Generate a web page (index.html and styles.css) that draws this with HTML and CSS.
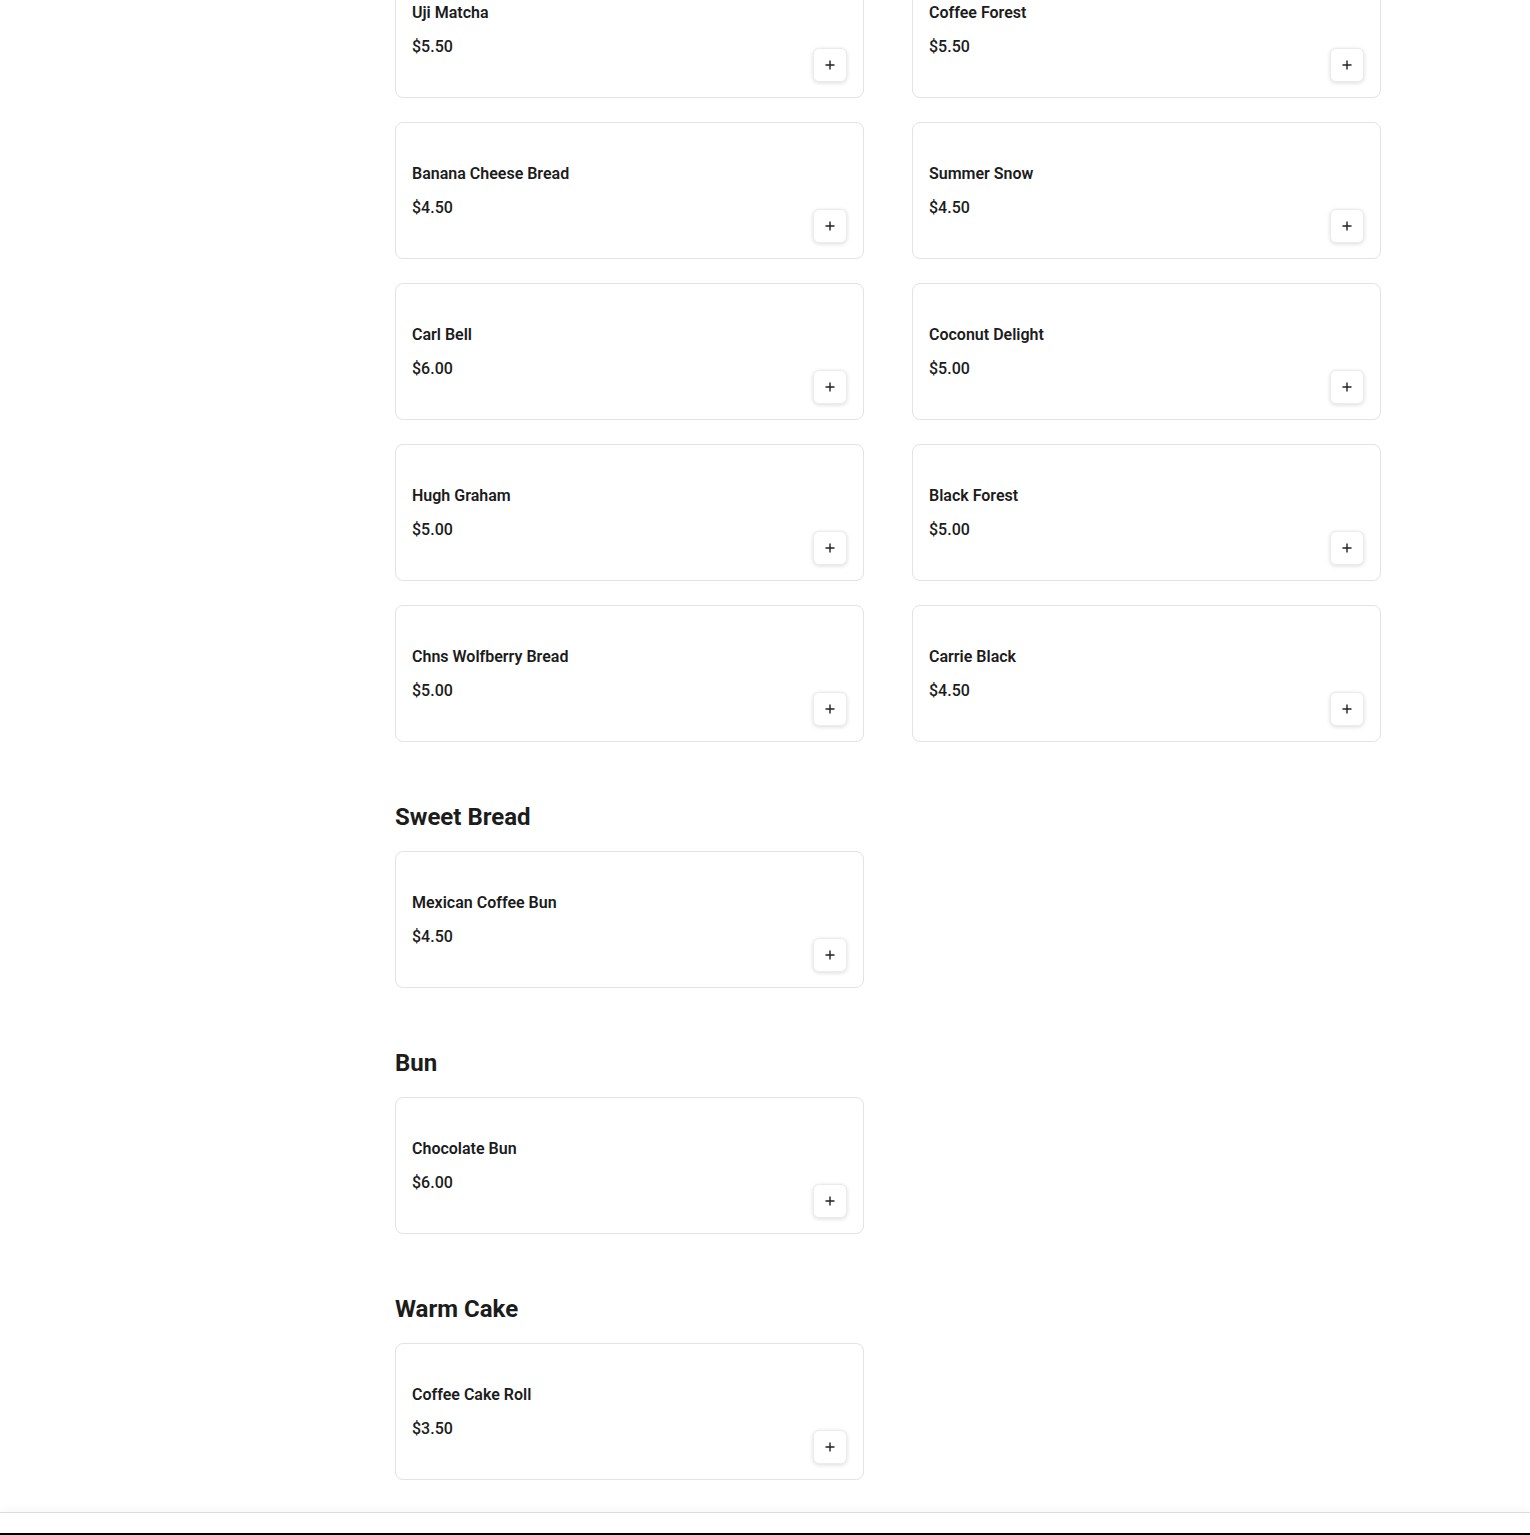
FILE: index.html
```html
<!DOCTYPE html>
<html lang="en">
<head>
    <meta charset="UTF-8">
    <meta name="viewport" content="width=device-width, initial-scale=1.0">
    <title>Menu</title>
    <link rel="stylesheet" href="styles.css">
</head>
<body>
    <main class="menu">
        <section class="menu-section">
            <div class="item-grid">
                <div class="item-card">
                    <div class="item-info">
                        <h3 class="item-name">Uji Matcha</h3>
                        <p class="item-price">$5.50</p>
                    </div>
                    <button class="add-btn" aria-label="Add"><svg width="12" height="12" viewBox="0 0 12 12"><path d="M6 1.5v9M1.5 6h9" stroke="#222" stroke-width="1.4" fill="none"/></svg></button>
                </div>
                <div class="item-card">
                    <div class="item-info">
                        <h3 class="item-name">Coffee Forest</h3>
                        <p class="item-price">$5.50</p>
                    </div>
                    <button class="add-btn" aria-label="Add"><svg width="12" height="12" viewBox="0 0 12 12"><path d="M6 1.5v9M1.5 6h9" stroke="#222" stroke-width="1.4" fill="none"/></svg></button>
                </div>
                <div class="item-card">
                    <div class="item-info">
                        <h3 class="item-name">Banana Cheese Bread</h3>
                        <p class="item-price">$4.50</p>
                    </div>
                    <button class="add-btn" aria-label="Add"><svg width="12" height="12" viewBox="0 0 12 12"><path d="M6 1.5v9M1.5 6h9" stroke="#222" stroke-width="1.4" fill="none"/></svg></button>
                </div>
                <div class="item-card">
                    <div class="item-info">
                        <h3 class="item-name">Summer Snow</h3>
                        <p class="item-price">$4.50</p>
                    </div>
                    <button class="add-btn" aria-label="Add"><svg width="12" height="12" viewBox="0 0 12 12"><path d="M6 1.5v9M1.5 6h9" stroke="#222" stroke-width="1.4" fill="none"/></svg></button>
                </div>
                <div class="item-card">
                    <div class="item-info">
                        <h3 class="item-name">Carl Bell</h3>
                        <p class="item-price">$6.00</p>
                    </div>
                    <button class="add-btn" aria-label="Add"><svg width="12" height="12" viewBox="0 0 12 12"><path d="M6 1.5v9M1.5 6h9" stroke="#222" stroke-width="1.4" fill="none"/></svg></button>
                </div>
                <div class="item-card">
                    <div class="item-info">
                        <h3 class="item-name">Coconut Delight</h3>
                        <p class="item-price">$5.00</p>
                    </div>
                    <button class="add-btn" aria-label="Add"><svg width="12" height="12" viewBox="0 0 12 12"><path d="M6 1.5v9M1.5 6h9" stroke="#222" stroke-width="1.4" fill="none"/></svg></button>
                </div>
                <div class="item-card">
                    <div class="item-info">
                        <h3 class="item-name">Hugh Graham</h3>
                        <p class="item-price">$5.00</p>
                    </div>
                    <button class="add-btn" aria-label="Add"><svg width="12" height="12" viewBox="0 0 12 12"><path d="M6 1.5v9M1.5 6h9" stroke="#222" stroke-width="1.4" fill="none"/></svg></button>
                </div>
                <div class="item-card">
                    <div class="item-info">
                        <h3 class="item-name">Black Forest</h3>
                        <p class="item-price">$5.00</p>
                    </div>
                    <button class="add-btn" aria-label="Add"><svg width="12" height="12" viewBox="0 0 12 12"><path d="M6 1.5v9M1.5 6h9" stroke="#222" stroke-width="1.4" fill="none"/></svg></button>
                </div>
                <div class="item-card">
                    <div class="item-info">
                        <h3 class="item-name">Chns Wolfberry Bread</h3>
                        <p class="item-price">$5.00</p>
                    </div>
                    <button class="add-btn" aria-label="Add"><svg width="12" height="12" viewBox="0 0 12 12"><path d="M6 1.5v9M1.5 6h9" stroke="#222" stroke-width="1.4" fill="none"/></svg></button>
                </div>
                <div class="item-card">
                    <div class="item-info">
                        <h3 class="item-name">Carrie Black</h3>
                        <p class="item-price">$4.50</p>
                    </div>
                    <button class="add-btn" aria-label="Add"><svg width="12" height="12" viewBox="0 0 12 12"><path d="M6 1.5v9M1.5 6h9" stroke="#222" stroke-width="1.4" fill="none"/></svg></button>
                </div>
            </div>
        </section>

        <section class="menu-section">
            <h2 class="section-title">Sweet Bread</h2>
            <div class="item-grid">
                <div class="item-card">
                    <div class="item-info">
                        <h3 class="item-name">Mexican Coffee Bun</h3>
                        <p class="item-price">$4.50</p>
                    </div>
                    <button class="add-btn" aria-label="Add"><svg width="12" height="12" viewBox="0 0 12 12"><path d="M6 1.5v9M1.5 6h9" stroke="#222" stroke-width="1.4" fill="none"/></svg></button>
                </div>
            </div>
        </section>

        <section class="menu-section">
            <h2 class="section-title">Bun</h2>
            <div class="item-grid">
                <div class="item-card">
                    <div class="item-info">
                        <h3 class="item-name">Chocolate Bun</h3>
                        <p class="item-price">$6.00</p>
                    </div>
                    <button class="add-btn" aria-label="Add"><svg width="12" height="12" viewBox="0 0 12 12"><path d="M6 1.5v9M1.5 6h9" stroke="#222" stroke-width="1.4" fill="none"/></svg></button>
                </div>
            </div>
        </section>

        <section class="menu-section">
            <h2 class="section-title">Warm Cake</h2>
            <div class="item-grid">
                <div class="item-card">
                    <div class="item-info">
                        <h3 class="item-name">Coffee Cake Roll</h3>
                        <p class="item-price">$3.50</p>
                    </div>
                    <button class="add-btn" aria-label="Add"><svg width="12" height="12" viewBox="0 0 12 12"><path d="M6 1.5v9M1.5 6h9" stroke="#222" stroke-width="1.4" fill="none"/></svg></button>
                </div>
            </div>
        </section>
    </main>
    <div class="bottom-bar"></div>
    <footer class="footer"></footer>
</body>
</html>
```

FILE: styles.css
```css
body {
    font-family: Roboto, "Liberation Sans", Arial, sans-serif;
    background-color: #fff;
    color: #1c1c1c;
    margin: 0;
    padding: 0;
}
.menu {
    width: 986px;
    margin: -39px 0 0 395px;
    padding-bottom: 32px;
}
.menu-section + .menu-section {
    margin-top: 61px;
}
.section-title {
    margin: 0 0 20px;
    font-size: 24px;
    line-height: 28px;
    font-weight: 700;
    color: #1c1c1c;
}
.item-grid {
    display: grid;
    grid-template-columns: 1fr 1fr;
    column-gap: 48px;
    row-gap: 24px;
}
.item-card {
    display: flex;
    align-items: center;
    justify-content: space-between;
    box-sizing: border-box;
    height: 137px;
    padding: 16px;
    border: 1px solid #e3e3e3;
    border-radius: 8px;
    background-color: #fff;
}
.item-name {
    margin: 0 0 10px;
    font-size: 16px;
    line-height: 24px;
    font-weight: 600;
}
.item-price {
    margin: 0;
    font-size: 16px;
    line-height: 24px;
    font-weight: 500;
}
.add-btn {
    align-self: flex-end;
    display: flex;
    align-items: center;
    justify-content: center;
    width: 34px;
    height: 34px;
    margin-bottom: -1px;
    padding: 0;
    background-color: #fff;
    border: 1px solid #ececec;
    border-radius: 6px;
    box-shadow: 0 1px 4px rgba(0, 0, 0, 0.14);
    cursor: pointer;
}
.bottom-bar {
    height: 20px;
    border-top: 1px solid #dcdcdc;
    background-color: #fff;
    box-shadow: 0 -3px 8px rgba(0, 0, 0, 0.03);
}
.footer {
    height: 60px;
    background-color: #000;
}
```
